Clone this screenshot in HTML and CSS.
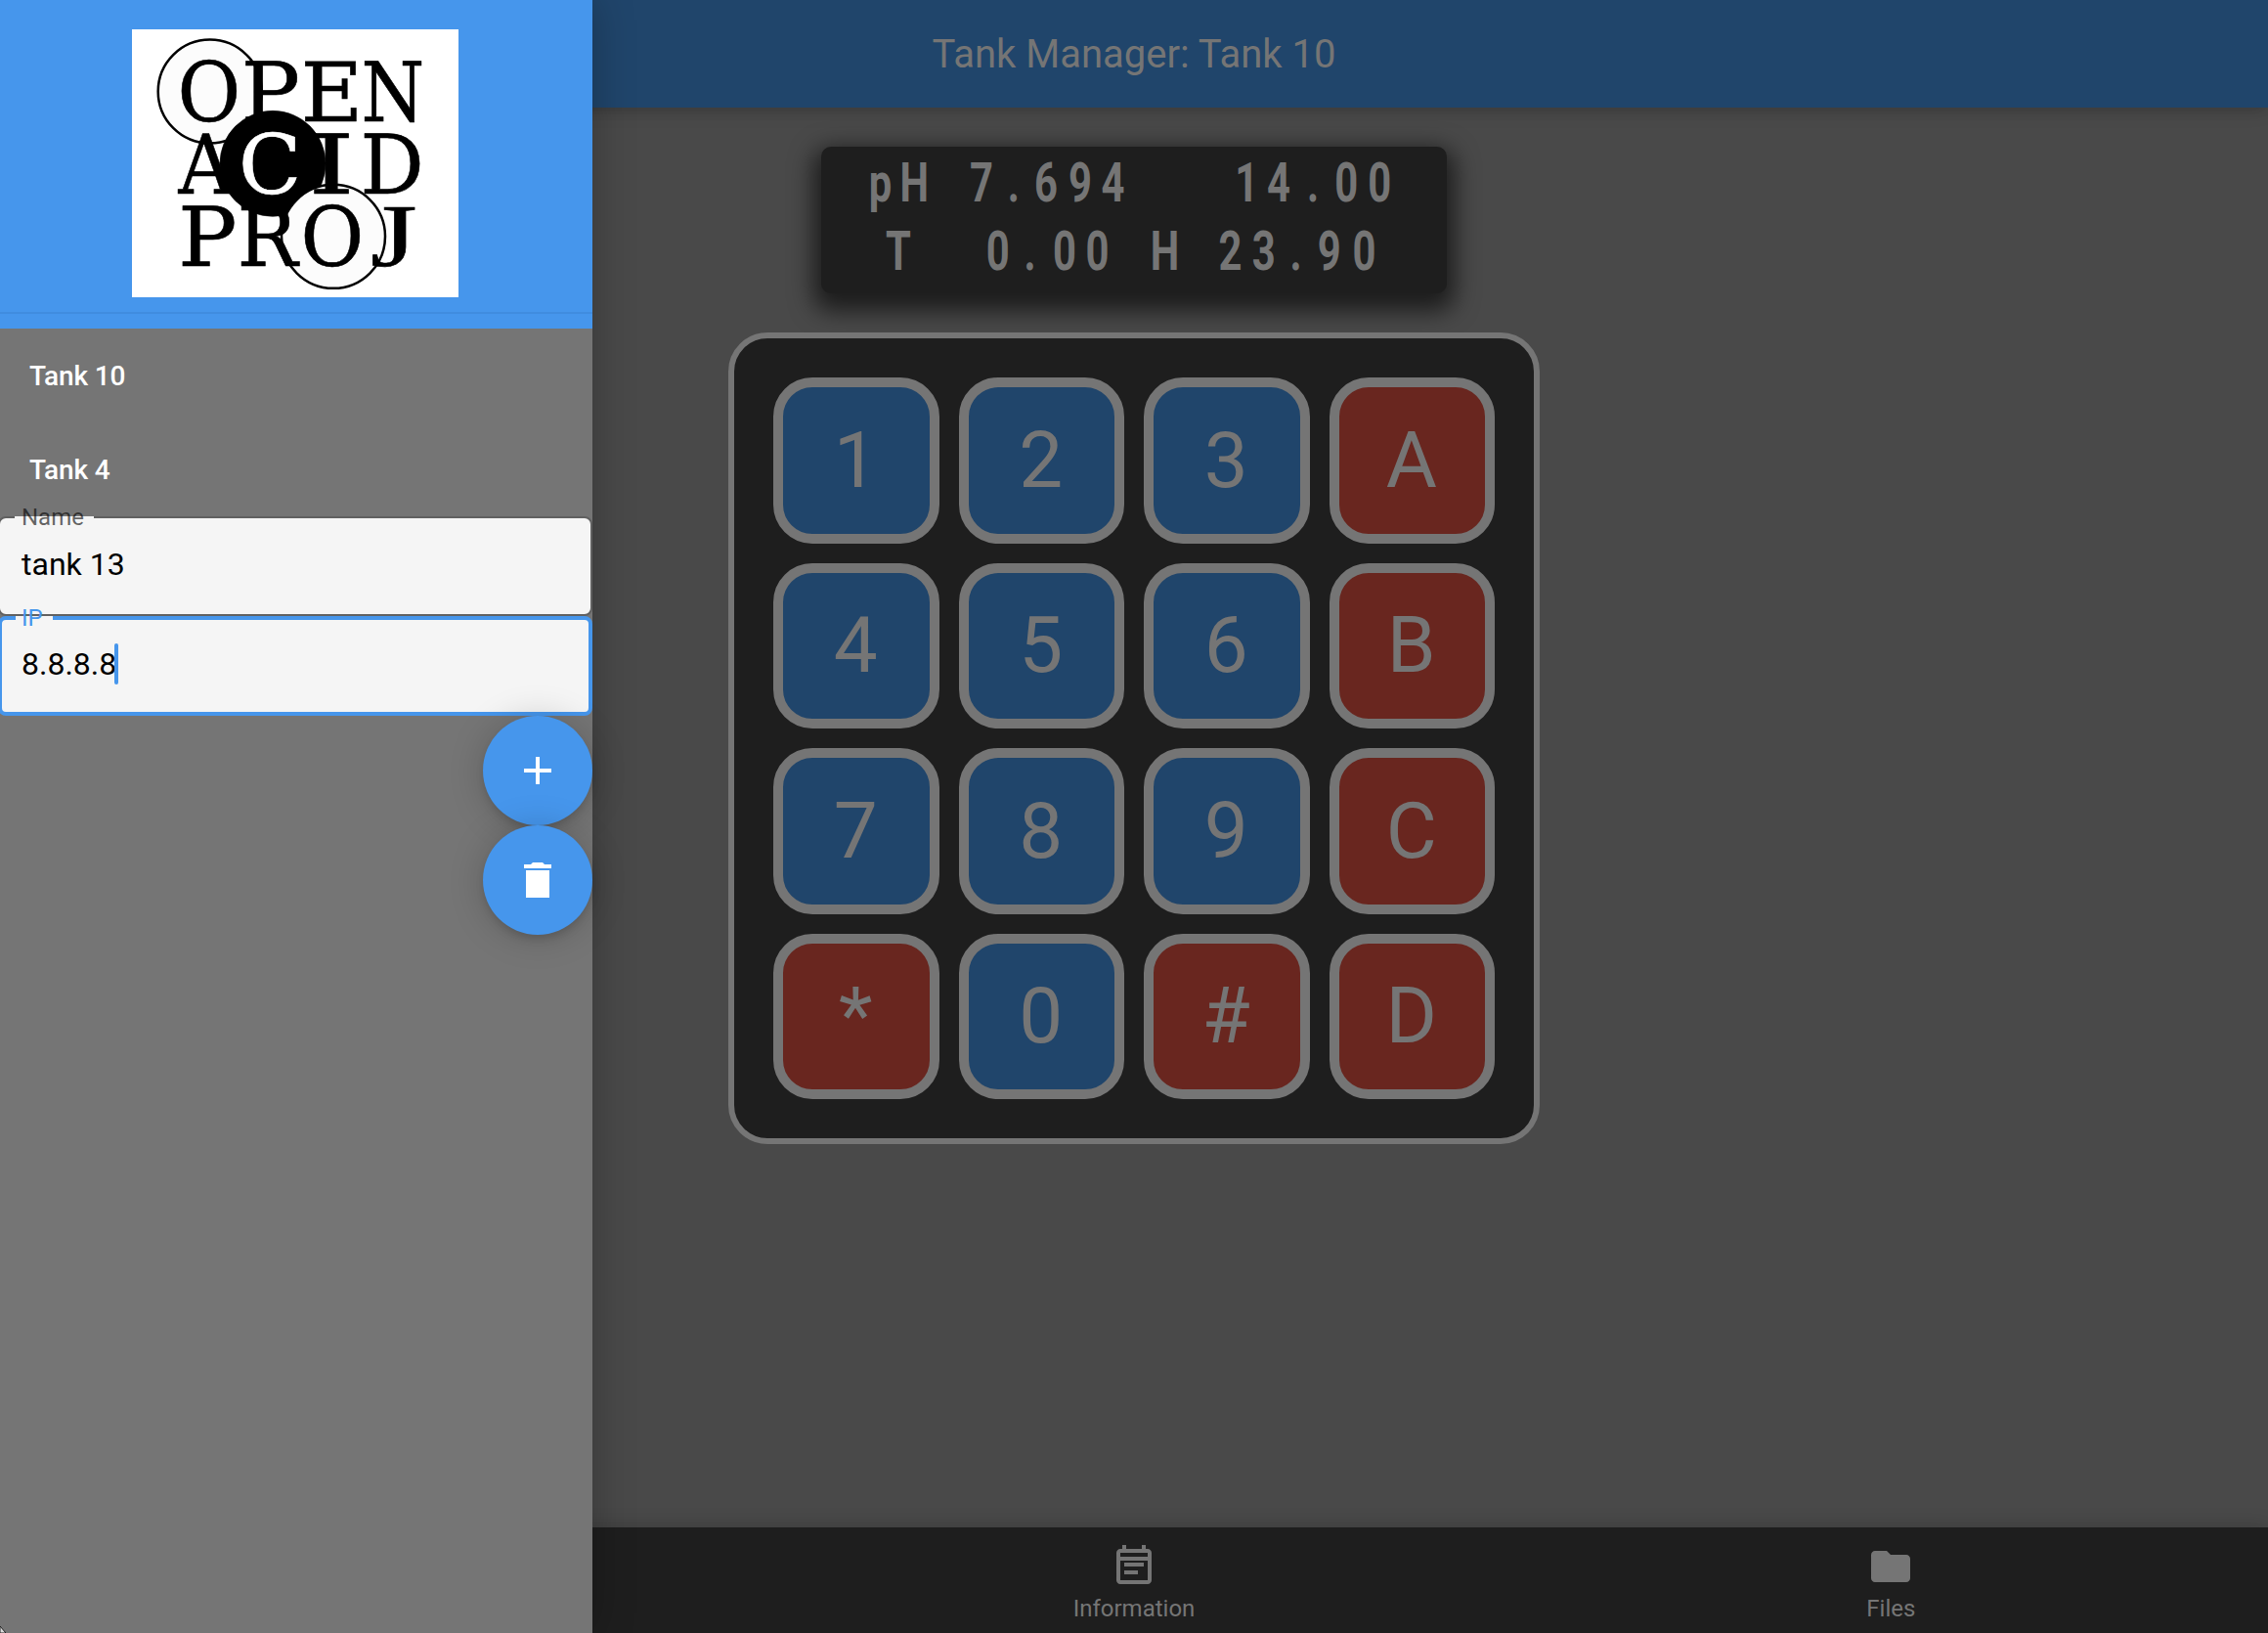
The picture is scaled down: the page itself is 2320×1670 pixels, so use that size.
FILE: index.html
```html
<!DOCTYPE html>
<html lang="en">
<head>
<meta charset="utf-8">
<title>Tank Manager</title>
<link rel="stylesheet" href="styles.css">
</head>
<body>
<div class="app">
  <header class="topbar"><h1 class="title">Tank Manager: Tank 10</h1></header>
  <main class="content">
    <div class="lcd">
      <svg class="lcd-text" width="640" height="150" viewBox="0 0 640 150">
        <g transform="scale(.76 1)">
          <text y="56.500" x="64 106 158 200 251 287 333 377">pH 7.694</text>
          <text y="56.500" x="557 600 654 691 736">14.00</text>
          <text y="126.500" x="87">T</text>
          <text y="126.500" x="222 273 312 356">0.00</text>
          <text y="126.500" x="443">H</text>
          <text y="126.500" x="535 580 631 668 715">23.90</text>
        </g>
      </svg>
    </div>
    <div class="keypad">
      <button class="key">1</button><button class="key">2</button><button class="key">3</button><button class="key red">A</button>
      <button class="key">4</button><button class="key">5</button><button class="key">6</button><button class="key red">B</button>
      <button class="key">7</button><button class="key">8</button><button class="key">9</button><button class="key red">C</button>
      <button class="key red">*</button><button class="key">0</button><button class="key red">#</button><button class="key red">D</button>
    </div>
  </main>
  <nav class="tabs">
    <div class="tab"></div>
    <div class="tab">
      <svg class="icon" viewBox="0 0 24 24"><path d="M17 10H7v2h10v-2zm2-7h-1V1h-2v2H8V1H6v2H5c-1.11 0-1.99.9-1.99 2L3 19c0 1.1.89 2 2 2h14c1.1 0 2-.9 2-2V5c0-1.1-.9-2-2-2zm0 16H5V9h14v10zm0-12H5V5h14v2zm-5 7H7v2h7v-2z"/></svg>
      <span>Information</span>
    </div>
    <div class="tab">
      <svg class="icon" viewBox="0 0 24 24"><path d="M10 4H4c-1.1 0-1.99.9-1.99 2L2 18c0 1.1.9 2 2 2h16c1.1 0 2-.9 2-2V8c0-1.1-.9-2-2-2h-8l-2-2z"/></svg>
      <span>Files</span>
    </div>
  </nav>
</div>
<aside class="drawer">
  <div class="drawer-head">
    <svg class="logo" width="334" height="274" viewBox="135 30 334 274">
      <circle class="ring" cx="214.7" cy="93.5" r="53"/>
      <circle cx="279" cy="167.3" r="54"/>
      <circle class="ring" cx="341" cy="241.8" r="53"/>
      <text transform="translate(181.500 124) scale(.94 1)">O</text>
      <text transform="translate(246.500 124) scale(1.07 1)">P</text>
      <text transform="translate(307.500 124) scale(1.04 1)">E</text>
      <text transform="translate(369.500 124) scale(.88 1)">N</text>
      <text transform="translate(182.500 198) scale(.93 1)">A</text>
      <text class="inverse" transform="translate(244 198) scale(1 1)">C</text>
      <text transform="translate(315 198) scale(1.450 1)">I</text>
      <text transform="translate(368.500 198) scale(.97 1)">D</text>
      <text transform="translate(182 272) scale(1.07 1)">P</text>
      <text transform="translate(242.500 272) scale(.98 1)">R</text>
      <text transform="translate(307.500 272) scale(.94 1)">O</text>
      <text class="narrow" transform="translate(379 272) scale(1.330 1)">J</text>
    </svg>
  </div>
  <div class="drawer-foot"></div>
  <div class="item">Tank 10</div>
  <div class="item">Tank 4</div>
  <div class="field"><span class="label">Name</span>tank 13</div>
  <div class="field focused"><span class="label">IP</span>8.8.8.8<i class="caret"></i></div>
  <button class="fab"><svg class="icon" viewBox="0 0 24 24"><path d="M19 13h-6v6h-2v-6H5v-2h6V5h2v6h6v2z"/></svg></button>
  <button class="fab"><svg class="icon" viewBox="0 0 24 24"><path d="M6 21h12V7H6v14zM19 4h-3.500l-1-1h-5l-1 1H5v2h14V4z"/></svg></button>
  <svg class="corner" width="6" height="7"><path d="M0 0L6 7H0z"/></svg>
</aside>
</body>
</html>
```
FILE: styles.css
```css
* { box-sizing: border-box; }
body { margin: 0; font-family: Roboto, sans-serif; }
button { font: inherit; padding: 0; border: 0; }
.icon { width: 48px; height: 48px; fill: currentColor; display: block; }

.app {
  width: 2320px;
  height: 1670px;
  display: flex;
  flex-direction: column;
  background: #494949;
  color: #757575;
  overflow: hidden;
}
.topbar {
  height: 110px;
  flex: none;
  display: flex;
  align-items: center;
  justify-content: center;
  background: #20456b;
  box-shadow: 0 4px 10px rgba(0, 0, 0, .12), 0 2px 20px rgba(0, 0, 0, .1);
}
.title { margin: 0; font-size: 40px; font-weight: 400; }
.content {
  flex: 1;
  display: flex;
  flex-direction: column;
  align-items: center;
  padding-top: 40px;
  gap: 40px;
}
.lcd {
  width: 640px;
  height: 150px;
  flex: none;
  border-radius: 10px;
  background: #1e1e1e;
  box-shadow: 0 10px 24px 8px rgba(0, 0, 0, .62);
}
.lcd-text { display: block; fill: #757575; font: 700 55px Roboto, sans-serif; white-space: pre; }
.keypad {
  width: 830px;
  height: 830px;
  display: grid;
  grid-template: repeat(4, 1fr) / repeat(4, 1fr);
  gap: 20px;
  padding: 40px;
  border: 6px solid #757575;
  border-radius: 40px;
  background: #1e1e1e;
}
.key {
  padding-right: 1px;
  border: 10px solid #757575;
  border-radius: 40px;
  background: #20456b;
  color: #757575;
  font-size: 80px;
  line-height: 1;
}
.key.red { background: #69261f; }
.tabs {
  height: 108px;
  flex: none;
  display: grid;
  grid-template-columns: repeat(3, 1fr);
  background: #1e1e1e;
  box-shadow: 0 -4px 16px rgba(0, 0, 0, .15);
}
.tab {
  display: flex;
  flex-direction: column;
  align-items: center;
  padding-top: 16px;
  gap: 5px;
  font-size: 24px;
  line-height: 28px;
}
.tab:last-child { padding-left: 2px; }

.drawer {
  position: absolute;
  left: 0;
  top: 0;
  width: 606px;
  height: 1670px;
  display: flex;
  flex-direction: column;
  background: #757575;
  box-shadow: 0 0 40px rgba(0, 0, 0, .25);
}
.drawer-head {
  height: 321px;
  padding: 30px 0 0 135px;
  background: #4696ec;
  border-bottom: 2px solid #408cdf;
}
.logo {
  display: block;
  background: #fff;
  stroke: #000;
  stroke-width: .6px;
  font: 84px "DejaVu Serif", serif;
}
.narrow { font: 92px "Liberation Serif", serif; }
.ring { fill: #fcfcfc; stroke-width: 2.5px; }
.inverse { fill: #fff; stroke: #fff; }
.drawer-foot { height: 15px; background: #4696ec; }
.item {
  height: 96px;
  display: flex;
  align-items: center;
  padding-left: 30px;
  color: #fff;
  font-size: 28px;
  font-weight: 500;
  letter-spacing: -.15px;
}
.field {
  position: relative;
  height: 102px;
  margin-left: -2px;
  display: flex;
  align-items: center;
  padding: 0 0 4px 22px;
  border: 2px solid #616161;
  border-radius: 8px;
  background: #f5f5f5;
  color: #000;
  font-size: 32px;
}
.field::before {
  content: "";
  position: absolute;
  left: 15px;
  top: -2px;
  width: 81px;
  height: 2px;
  background: #f5f5f5;
}
.label {
  position: absolute;
  left: 22px;
  top: -15px;
  font-size: 24px;
  line-height: 28px;
  color: rgba(0, 0, 0, .6);
}
.focused { border: 4px solid #4696ec; padding-left: 20px; }
.focused::before { left: 14px; top: -4px; width: 38px; height: 4px; }
.focused .label { left: 20px; top: -16px; color: #4696ec; }
.caret { width: 4px; height: 42px; border-radius: 2px; background: #4696ec; margin-left: -2px; }
.fab {
  position: relative;
  width: 112px;
  height: 112px;
  display: flex;
  align-items: center;
  justify-content: center;
  align-self: flex-end;
  border-radius: 50%;
  background: #4696ec;
  color: #fff;
  box-shadow: 0 6px 10px -2px rgba(0, 0, 0, .15), 0 2px 36px rgba(0, 0, 0, .18);
}
.corner { margin-top: auto; fill: #ddd; stroke: #222; }
```
